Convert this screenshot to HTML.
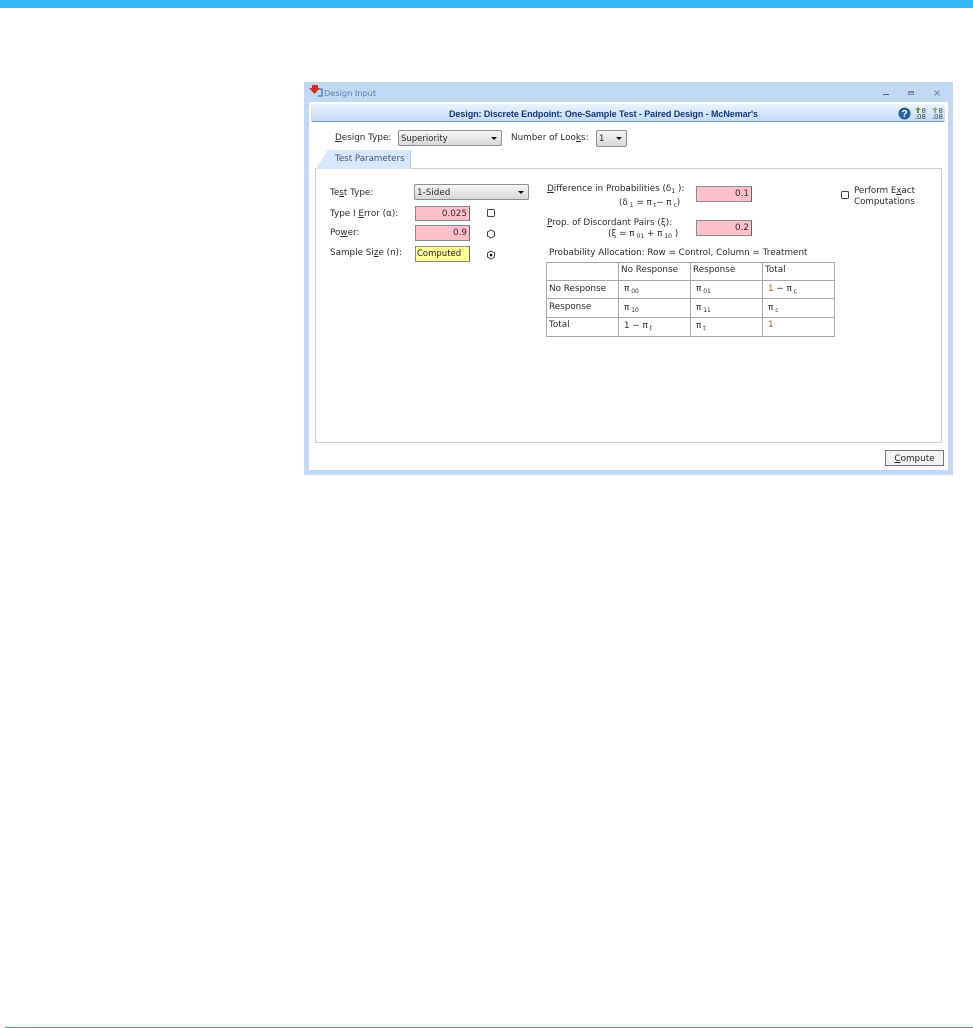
<!DOCTYPE html>
<html><head><meta charset="utf-8"><style>
html,body{margin:0;padding:0;background:#fff}
body{width:973px;height:1028px;position:relative;overflow:hidden;font-family:"DejaVu Sans","Liberation Sans",sans-serif;font-size:8.8px;color:#2a2a2a}
.a,.t{position:absolute}
.t{white-space:nowrap;line-height:11px}
.in{position:absolute;box-sizing:border-box;background:#ffc0cb;border:1px solid #8a8a8a;border-right-color:#666;text-align:right;padding-right:2px;line-height:15px}
.sel{position:absolute;box-sizing:border-box;border:1px solid #8f8f8f;border-radius:2px;background:linear-gradient(#f6f6f6,#d8d8d8);padding-left:2px;line-height:17px;font-size:8.5px}
.sel:after{content:"";position:absolute;right:4px;top:6px;border:3px solid transparent;border-top:3px solid #111;border-bottom:0}
.cb{position:absolute;box-sizing:border-box;width:8px;height:8px;border:1px solid #444;border-radius:1.5px;background:#fff}
u{text-decoration:underline}
sub{font-size:6px;vertical-align:-2px;line-height:0}
.c{position:absolute;white-space:nowrap;line-height:11px}
.ln{position:absolute;background:#a8a8a8}
#w{position:absolute;left:0;top:0;width:973px;height:1028px;filter:blur(.3px)}
</style></head><body>
<div class="a" style="left:0;top:0;width:973px;height:8px;background:#35b8f3"></div>
<div class="a" style="left:5px;top:1027px;width:968px;height:1px;background:#2a9fd6"></div>
<div id="w">
<div class="a" style="left:304px;top:82px;width:649px;height:393px;background:#c2d9f5"></div>
<div class="a" style="left:309px;top:102px;width:639px;height:368px;background:#fff"></div>
<div class="a" style="left:311px;top:104px;width:634px;height:18px;border-radius:3px;background:linear-gradient(#eaf3fd,#c4daf5);border-bottom:1px solid #6f9bd4;box-sizing:border-box"></div>

<svg class="a" style="left:309px;top:85px" width="14" height="12" viewBox="0 0 14 12"><path d="M3 0h6v3h2L5.500 9 0 3h3z" fill="#d03020"/><path d="M10 4h3v7H9" fill="none" stroke="#2c5a96" stroke-width="1"/></svg>
<div class="t" style="left:324px;top:88px;color:#5d7fae;font-size:8.200px">Design Input</div>
<div class="a" style="left:883px;top:94px;width:6px;height:1px;background:#666"></div>
<div class="a" style="left:908px;top:91px;width:6px;height:4px;box-sizing:border-box;border:1px solid #889;border-top-width:2px"></div>
<svg class="a" style="left:934px;top:90px" width="6" height="6"><path d="M.5.500l5 5M5.500.500l-5 5" stroke="#889" stroke-width="1"/></svg>

<div class="t" style="left:449px;top:109px;font-family:'Liberation Sans',sans-serif;font-weight:bold;font-size:9px;color:#14397a;letter-spacing:-.08px">Design: Discrete Endpoint: One-Sample Test - Paired Design - McNemar's</div>

<svg class="a" style="left:898px;top:107px" width="13" height="13" viewBox="0 0 13 13"><circle cx="6.500" cy="6.500" r="6" fill="#2a5f9e"/><text x="6.500" y="10" font-size="10" font-weight="bold" fill="#fff" text-anchor="middle" font-family="Liberation Sans">?</text></svg>
<svg class="a" style="left:914px;top:107px" width="30" height="13" viewBox="0 0 30 13">
<path d="M4 0l3 3H5v3H3V3H1z" fill="#5aa02c"/><path d="M21 0l3 3h-2v3h-2V3h-2z" fill="#8cb060"/>
<text x="1" y="12" font-size="8" fill="#444" font-family="DejaVu Sans">.</text><text x="3" y="12" font-size="7" fill="#444" font-family="DejaVu Sans">0</text><text x="7.500" y="12" font-size="7" fill="#444" font-family="DejaVu Sans">8</text>
<text x="7.500" y="6" font-size="7" fill="#444" font-family="DejaVu Sans">8</text>
<text x="18" y="12" font-size="8" fill="#444" font-family="DejaVu Sans">.</text><text x="20" y="12" font-size="7" fill="#444" font-family="DejaVu Sans">0</text><text x="24.500" y="12" font-size="7" fill="#444" font-family="DejaVu Sans">8</text>
<text x="24.500" y="6" font-size="7" fill="#444" font-family="DejaVu Sans">8</text></svg>

<div class="t" style="left:335px;top:133px"><u>D</u>esign Type:</div>
<div class="sel" style="left:398px;top:130px;width:104px;height:16px">Superiority</div>
<div class="t" style="left:511px;top:133px">Number of Loo<u>k</u>s:</div>
<div class="sel" style="left:596px;top:130px;width:31px;height:17px">1</div>

<div class="a" style="left:315px;top:168px;width:627px;height:275px;box-sizing:border-box;border:1px solid #cfcfcf;background:#fff"></div>
<svg class="a" style="left:316px;top:150px" width="95" height="19"><path d="M0 19L11 1Q12 0 14 0H94V19z" fill="#d8e7f9"/><path d="M94.500 0V18" stroke="#c4d4e8"/></svg>
<div class="t" style="left:335px;top:154px;color:#3d5a80;font-size:8.700px">Test Parameters</div>

<div class="t" style="left:330px;top:188px">Te<u>s</u>t Type:</div>
<div class="sel" style="left:414px;top:184px;width:115px;height:16px;font-size:8.800px">1-Sided</div>
<div class="t" style="left:330px;top:209px">Type I <u>E</u>rror (α):</div>
<div class="in" style="left:415px;top:206px;width:55px;height:15px;line-height:14px">0.025</div>
<div class="cb" style="left:487px;top:209px"></div>
<div class="t" style="left:330px;top:228px">Po<u>w</u>er:</div>
<div class="in" style="left:415px;top:225px;width:55px;height:16px">0.9</div>
<svg class="a" style="left:486px;top:229px" width="10" height="10"><path d="M5 1l3.500 2v4L5 9 1.500 7V3z" fill="#fff" stroke="#444"/></svg>
<div class="t" style="left:330px;top:248px">Sample Si<u>z</u>e (n):</div>
<div class="in" style="left:415px;top:246px;width:55px;height:16px;background:#ffff99;text-align:left;padding-left:1px;color:#222;font-size:8.500px">Computed</div>
<svg class="a" style="left:486px;top:250px" width="10" height="10"><path d="M5 1l3.500 2v4L5 9 1.500 7V3z" fill="#fff" stroke="#444"/><circle cx="5" cy="5" r="1.300" fill="#111"/></svg>

<div class="t" style="left:547px;top:184px"><u>D</u>ifference in Probabilities (δ<sub>1</sub> ):</div>
<div class="t" style="left:619px;top:198px">(δ<sub> 1</sub> = π<sub> t</sub>− π<sub> c</sub>)</div>
<div class="in" style="left:696px;top:186px;width:56px;height:16px">0.1</div>
<div class="t" style="left:547px;top:218px"><u>P</u>rop. of Discordant Pairs (ξ):</div>
<div class="t" style="left:608px;top:229px">(ξ = π<sub> 01</sub> + π<sub> 10</sub> )</div>
<div class="in" style="left:696px;top:220px;width:56px;height:16px">0.2</div>

<div class="cb" style="left:841px;top:191px"></div>
<div class="t" style="left:854px;top:186px;font-size:8.700px">Perform E<u>x</u>act</div>
<div class="t" style="left:854px;top:197px;font-size:8.700px">Computations</div>

<div class="t" style="left:549px;top:248px">Probability Allocation: Row = Control, Column = Treatment</div>

<div class="ln" style="left:546px;top:262px;width:289px;height:1px"></div>
<div class="ln" style="left:546px;top:280px;width:289px;height:1px"></div>
<div class="ln" style="left:546px;top:298px;width:289px;height:1px"></div>
<div class="ln" style="left:546px;top:317px;width:289px;height:1px"></div>
<div class="ln" style="left:546px;top:336px;width:289px;height:1px"></div>
<div class="ln" style="left:546px;top:262px;width:1px;height:75px"></div>
<div class="ln" style="left:618px;top:262px;width:1px;height:75px"></div>
<div class="ln" style="left:690px;top:262px;width:1px;height:75px"></div>
<div class="ln" style="left:762px;top:262px;width:1px;height:75px"></div>
<div class="ln" style="left:834px;top:262px;width:1px;height:75px"></div>

<div class="c" style="left:621px;top:265px">No Response</div>
<div class="c" style="left:693px;top:265px">Response</div>
<div class="c" style="left:765px;top:265px">Total</div>
<div class="c" style="left:549px;top:284px">No Response</div>
<div class="c" style="left:624px;top:284px">π<sub> 00</sub></div>
<div class="c" style="left:696px;top:284px">π<sub> 01</sub></div>
<div class="c" style="left:768px;top:284px"><span style="color:#a05a10">1</span> − π<sub> c</sub></div>
<div class="c" style="left:549px;top:302px">Response</div>
<div class="c" style="left:624px;top:303px">π<sub> 10</sub></div>
<div class="c" style="left:696px;top:303px">π<sub> 11</sub></div>
<div class="c" style="left:768px;top:303px">π<sub> c</sub></div>
<div class="c" style="left:549px;top:320px">Total</div>
<div class="c" style="left:624px;top:321px">1 − π<sub> t</sub></div>
<div class="c" style="left:696px;top:321px">π<sub> t</sub></div>
<div class="c" style="left:768px;top:320px;color:#a05a10">1</div>

<div class="a" style="left:885px;top:450px;width:59px;height:16px;box-sizing:border-box;border:1px solid #777;background:#f2f2f2;text-align:center;line-height:17px"><u>C</u>ompute</div>
</div>
</body></html>
